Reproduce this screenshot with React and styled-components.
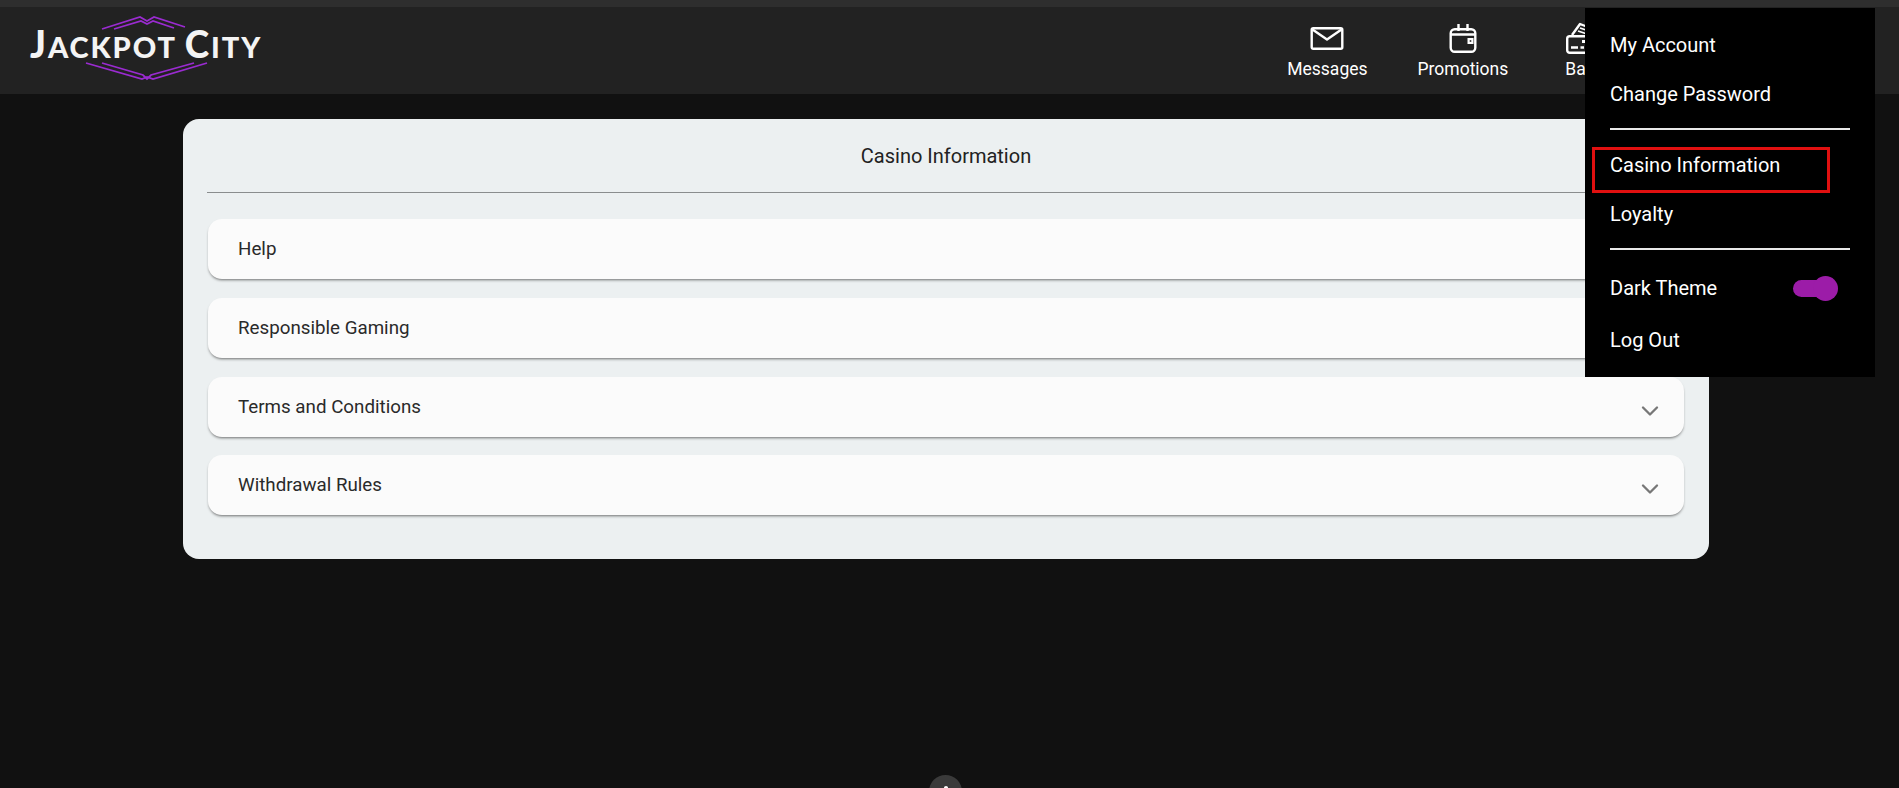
import React from "react";
import styled, { createGlobalStyle } from "styled-components";
import { ChevronDown } from "lucide-react";

const Global = createGlobalStyle`
  html, body { margin: 0; padding: 0; background: #111111; }
  body { font-family: Roboto, "Liberation Sans", sans-serif; overflow: hidden; }
  #root { height: 788px; }
`;

const Page = styled.div`
  position: relative;
  width: 1899px;
  height: 788px;
  overflow: hidden;
  background: #111111;
`;

const Header = styled.header`
  display: flex;
  align-items: stretch;
  justify-content: space-between;
  height: 87px;
  border-top: 7px solid #2e2e2e;
  background: #222222;
  padding: 0 24px 0 28px;
`;

const Logo = styled.div`
  position: relative;
  width: 240px;
  height: 87px;
  flex: none;
`;

const LogoLines = styled.svg`
  position: absolute;
  left: 0;
  top: 0;
`;

const LogoText = styled.span`
  position: absolute;
  left: 2px;
  top: 17px;
  color: #f4f4f4;
  font-family: Lato, "Open Sans", sans-serif;
  font-weight: 900;
  font-size: 29px;
  line-height: 40px;
  letter-spacing: 1.9px;
  white-space: nowrap;
`;

const LogoCap = styled.span`
  font-size: 37px;
`;

const Nav = styled.nav`
  display: flex;
  gap: 50px;
  margin-right: 247px;
`;

const NavItem = styled.a`
  display: flex;
  flex-direction: column;
  align-items: ${(p) => (p.$start ? "flex-start" : "center")};
  margin-left: ${(p) => (p.$start ? "7px" : "0")};
  color: #fff;
  font-size: 17.5px;
  line-height: 22px;
  padding-top: 15px;
`;

const NavIcon = styled.svg`
  display: block;
  width: 36px;
  height: 36px;
`;

const Main = styled.main`
  padding: 25px 190px 0 183px;
`;

const Panel = styled.section`
  box-sizing: border-box;
  height: 440px;
  background: #ecf0f1;
  border-radius: 16px;
  padding: 0 25px;
`;

const PanelTitle = styled.h1`
  margin: 0 -1px;
  height: 74px;
  box-sizing: border-box;
  border-bottom: 1px solid #8a8d8e;
  color: #222;
  font-size: 20px;
  font-weight: 400;
  line-height: 74px;
  text-align: center;
`;

const Rows = styled.div`
  display: flex;
  flex-direction: column;
  gap: 18.75px;
  padding-top: 26px;
`;

const Row = styled.div`
  box-sizing: border-box;
  display: flex;
  align-items: center;
  justify-content: space-between;
  height: 60px;
  padding: 0 20px 0 30px;
  background: #fbfbfb;
  border-radius: 14px;
  box-shadow: 0 2px 3px -1px rgba(0, 0, 0, 0.55);
  color: #2a2a2a;
  font-size: 18.75px;
`;

const Chevron = styled(ChevronDown)`
  width: 28px;
  height: 28px;
  color: #777;
  margin-top: 8px;
`;

const Menu = styled.div`
  position: absolute;
  left: 1585px;
  top: 8px;
  box-sizing: border-box;
  width: 290px;
  height: 369px;
  padding: 12.5px 25px 0;
  background: #000;
  color: #fff;
  font-size: 20px;
`;

const MenuItem = styled.div`
  position: relative;
  display: flex;
  align-items: center;
  justify-content: space-between;
  height: ${(p) => (p.$tall ? "55px" : "49px")};
`;

const Divider = styled.hr`
  margin: 9px 0 11px;
  border: 0;
  border-top: 2px solid #e8e8e8;
`;

const Highlight = styled.span`
  position: absolute;
  left: -18px;
  top: 6px;
  width: 238px;
  height: 46px;
  box-sizing: border-box;
  border: 3px solid #e01010;
`;

const Switch = styled.span`
  position: relative;
  width: 40px;
  height: 17px;
  margin-right: 17px;
  border-radius: 9px;
  background: #9c1ca8;
`;

const Knob = styled.span`
  position: absolute;
  right: -5px;
  top: -4px;
  width: 25px;
  height: 25px;
  border-radius: 50%;
  background: #9c1ca8;
`;

const Floating = styled.div`
  position: absolute;
  left: 929px;
  top: 775px;
  width: 33px;
  height: 33px;
  border-radius: 50%;
  background: #3a3a3a;
  display: flex;
  justify-content: center;
`;

const Dot = styled.span`
  width: 4px;
  height: 3px;
  margin-top: 11px;
  border-radius: 50%;
  background: #fff;
`;

const rows = ["Help", "Responsible Gaming", "Terms and Conditions", "Withdrawal Rules"];

export default function App() {
  return (
    <Page>
      <Global />
      <Header>
        <Logo>
          <LogoLines width="240" height="87" viewBox="0 0 240 87" fill="none" stroke="#9a2bd0" strokeWidth="1.8">
            <path d="M74 22 L112 10 L119 14 L126 10 L157 20" />
            <path d="M86 22 L113 14 L119 17 L125 14 L146 21" />
            <path d="M58 56 L114 72 L119 70 L125 72 L179 56" />
            <path d="M74 56 L115 68 L119 72 L123 68 L166 56" />
          </LogoLines>
          <LogoText><LogoCap>J</LogoCap>ACKPOT <LogoCap>C</LogoCap>ITY</LogoText>
        </Logo>
        <Nav>
          <NavItem>
            <NavIcon viewBox="0 0 36 36" fill="none" stroke="#fff" strokeWidth="2.4" strokeLinejoin="round">
              <rect x="2.7" y="6.2" width="30.6" height="20.6" rx="1.5" />
              <path d="M3.5 7.5 L18 17.5 L32.5 7.5" />
            </NavIcon>
            Messages
          </NavItem>
          <NavItem>
            <NavIcon viewBox="0 0 36 36" fill="none" stroke="#fff" strokeWidth="2.4">
              <rect x="5.7" y="7.2" width="24.6" height="22.6" rx="4" />
              <path d="M5.7 12.5 H30.3 M13.5 2 V9 M22.5 2 V9" />
              <rect x="22.5" y="16" width="6" height="6" fill="#fff" stroke="none" />
              <rect x="24.7" y="18.2" width="1.6" height="1.6" fill="#222" stroke="none" />
            </NavIcon>
            Promotions
          </NavItem>
          <NavItem $start>
            <NavIcon viewBox="0 0 36 36" fill="none" stroke="#fff" strokeWidth="2.4" strokeLinejoin="round">
              <path d="M7 13 L15 2 L28 7 L26 13" />
              <path d="M15 6 L27 10 M13 9 L25 13" strokeWidth="1.8" />
              <rect x="2.2" y="14.2" width="30" height="16.6" rx="2.5" />
              <path d="M6 25.5 H13 M15.5 25.5 H19" />
              <rect x="17" y="18" width="5" height="3" fill="#fff" stroke="none" />
            </NavIcon>
            Banking
          </NavItem>
        </Nav>
      </Header>
      <Main>
        <Panel>
          <PanelTitle>Casino Information</PanelTitle>
          <Rows>
            {rows.map((r) => (
              <Row key={r}>
                {r}
                <Chevron strokeWidth={2} />
              </Row>
            ))}
          </Rows>
        </Panel>
      </Main>
      <Menu>
        <MenuItem>My Account</MenuItem>
        <MenuItem>Change Password</MenuItem>
        <Divider />
        <MenuItem><Highlight />Casino Information</MenuItem>
        <MenuItem>Loyalty</MenuItem>
        <Divider />
        <MenuItem $tall>Dark Theme<Switch><Knob /></Switch></MenuItem>
        <MenuItem>Log Out</MenuItem>
      </Menu>
      <Floating><Dot /></Floating>
    </Page>
  );
}
